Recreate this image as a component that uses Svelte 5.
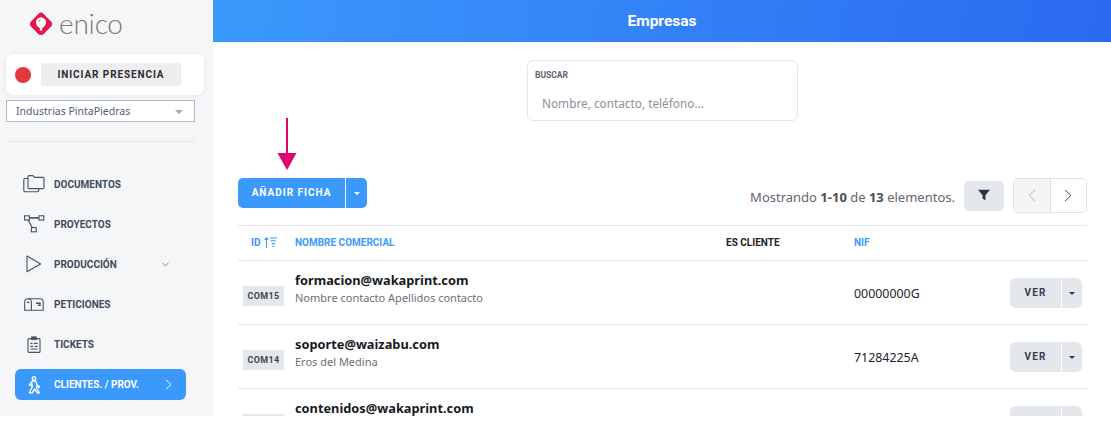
<script>
	const nav = [
		{ label: 'DOCUMENTOS', icon: 'docs' },
		{ label: 'PROYECTOS', icon: 'proj' },
		{ label: 'PRODUCCIÓN', icon: 'play', chevron: true },
		{ label: 'PETICIONES', icon: 'mail' },
		{ label: 'TICKETS', icon: 'clip' }
	];

	const rows = [
		{ id: 'COM15', email: 'formacion@wakaprint.com', contact: 'Nombre contacto Apellidos contacto', nif: '00000000G' },
		{ id: 'COM14', email: 'soporte@waizabu.com', contact: 'Eros del Medina', nif: '71284225A' },
		{ id: '', email: 'contenidos@wakaprint.com', contact: '', nif: '' }
	];
</script>

<div class="page">
	<aside class="sidebar">
		<div class="logo">
			<svg width="24" height="24" viewBox="0 0 24 24">
				<path d="M12 .6 C13 .6 14 1.2 15 2.2 L22 9.4 C23.6 11 23.6 13 22 14.6 L15 21.8 C13.4 23.4 10.6 23.4 9 21.8 L2 14.6 C.4 13 .4 11 2 9.4 L9 2.2 C10 1.2 11 .6 12 .6 Z" fill="#e6174f" />
				<path d="M12 5.6 C15 5.6 17 7.8 17 10.4 C17 13.2 14.8 15.2 13 16.2 L13.4 18.6 L10.6 18.6 L11 16.2 C9.2 15.2 7 13.2 7 10.4 C7 7.8 9 5.6 12 5.6 Z" fill="#fff" />
				<path d="M9.4 9.6 C9.8 8.6 10.6 8 11.6 7.8" fill="none" stroke="#e6174f" stroke-width=".9" />
			</svg>
			<span>enico</span>
		</div>

		<div class="presence">
			<span class="dot"></span>
			<button class="start">INICIAR PRESENCIA</button>
		</div>

		<div class="select">
			<span>Industrias PintaPiedras</span>
			<i class="select-caret"></i>
		</div>

		<hr />

		<nav>
			{#each nav as item}
				<div class="nav-item">
					<span class="nav-icon">
						{#if item.icon === 'docs'}
							<svg width="22" height="18" viewBox="0 0 22 18" fill="none" stroke="#47515f" stroke-width="1.1">
								<path d="M5 3.5 H2 C1.2 3.5 .8 4 .8 4.8 V15.5 C.8 16.3 1.2 16.7 2 16.7 H14.5 C15.3 16.7 15.8 16.3 15.8 15.5 V13.5" />
								<path d="M5 12.5 C5 13.2 5.5 13.6 6.2 13.6 H19.8 C20.6 13.6 21 13.2 21 12.5 V3.6 C21 2.8 20.6 2.4 19.8 2.4 H11.5 L9.8 .6 H6.2 C5.5 .6 5 1 5 1.8 Z" />
							</svg>
						{:else if item.icon === 'proj'}
							<svg width="21" height="18" viewBox="0 0 21 18" fill="none" stroke="#47515f" stroke-width="1.1">
								<rect x=".6" y=".8" width="4.8" height="4.2" />
								<rect x="15" y=".8" width="4.8" height="4.2" />
								<rect x="7.4" y="12.6" width="4.8" height="4.2" />
								<path d="M5.4 2.9 H15" stroke-width="1.6" />
								<path d="M4 5 L8.4 12.6" />
							</svg>
						{:else if item.icon === 'play'}
							<svg width="16" height="18" viewBox="0 0 16 18" fill="none" stroke="#47515f" stroke-width="1.1">
								<path d="M1 1 L14.6 9 L1 16.8 Z" stroke-linejoin="round" />
							</svg>
						{:else if item.icon === 'mail'}
							<svg width="20" height="13" viewBox="0 0 20 13" fill="none" stroke="#47515f" stroke-width="1.1">
								<path d="M.7 12.2 V4 C.7 2 2 .7 4 .7 H16 C18 .7 19.2 2 19.2 4 V12.2 Z" />
								<path d="M7.4 12.2 V4 C7.4 2 6 .7 4 .7" />
								<path d="M3 4.4 H5.4" stroke-width="1.4" />
								<path d="M12 5.2 H16 V7.4 H14" stroke-width="1.4" />
							</svg>
						{:else}
							<svg width="14" height="17" viewBox="0 0 14 17" fill="none" stroke="#47515f" stroke-width="1.1">
								<rect x="1" y="2.6" width="12" height="13.8" rx="1" />
								<rect x="4.6" y=".8" width="4.8" height="3" fill="#47515f" stroke-width=".6" />
								<path d="M3.4 7.4 H5.6 M7 7.4 H10.6 M3.4 10.4 H6 M7.6 10.4 H10.6 M3.4 13 H10.6" />
							</svg>
						{/if}
					</span>
					<span class="nav-label">{item.label}</span>
					{#if item.chevron}
						<svg class="nav-chevron" width="7" height="5" viewBox="0 0 7 5" fill="none" stroke="#6b7483" stroke-width=".9">
							<path d="M.6 1 L3.5 3.8 L6.4 1" />
						</svg>
					{/if}
				</div>
			{/each}
			<div class="nav-item active">
				<span class="nav-icon">
					<svg width="13" height="18" viewBox="0 0 13 18" fill="none" stroke="#fff" stroke-width="1.3" stroke-linejoin="round">
						<circle cx="6" cy="2.4" r="1.7" />
						<path d="M4.4 5 H7.6 L9.4 9.4 L11.6 10.6 L10.8 11.6 L8.4 10.4 L8.4 12 L11.4 16.8 L9.4 17.2 L6.4 13 L4 17.2 L1.4 16.6 L4.2 11 L4.2 8 L3 9.6 L1.4 9 Z" />
					</svg>
				</span>
				<span class="nav-label">CLIENTES. / PROV.</span>
				<svg class="nav-chevron active-chevron" width="7" height="11" viewBox="0 0 7 11" fill="none" stroke="#fff" stroke-width="1">
					<path d="M1 .8 L6 5.5 L1 10.2" />
				</svg>
			</div>
		</nav>
	</aside>

	<main>
		<header>Empresas</header>

		<div class="content">
			<div class="search">
				<label for="buscar">BUSCAR</label>
				<input id="buscar" placeholder="Nombre, contacto, teléfono..." />
			</div>

			<div class="toolbar">
				<div class="add">
					<svg class="arrow" width="20" height="54" viewBox="0 0 20 54">
						<rect x="9" y="0" width="2" height="37" fill="#e0046c" />
						<path d="M.5 35 H19.5 L10 52 Z" fill="#e0046c" />
					</svg>
					<button class="add-main">AÑADIR FICHA</button>
					<button class="add-caret"><i class="caret"></i></button>
				</div>
				<div class="summary">Mostrando <b>1-10</b> de <b>13</b> elementos.</div>
				<button class="filter">
					<svg width="12" height="12" viewBox="0 0 12 12"><path d="M0 .8 H12 L7.4 6.2 V11.4 L4.6 9.6 V6.2 Z" fill="#2c3340" /></svg>
				</button>
				<div class="pager">
					<button disabled>
						<svg width="8" height="13" viewBox="0 0 8 13" fill="none" stroke="#b4b9c0" stroke-width="1"><path d="M7 1 L1 6.5 L7 12" /></svg>
					</button>
					<button>
						<svg width="8" height="13" viewBox="0 0 8 13" fill="none" stroke="#4a5260" stroke-width="1"><path d="M1 1 L7 6.5 L1 12" /></svg>
					</button>
				</div>
			</div>

			<div class="table">
				<div class="row head">
					<div class="id-head">
						ID
						<svg width="13" height="11" viewBox="0 0 13 11" fill="none" stroke="#3b99fc" stroke-width="1.1">
							<path d="M2.5 11 V1 M.6 3 L2.5 .8 L4.4 3 M5.6 1 H13 M6.6 3.8 H12 M7.6 6.6 H11 M8.4 9.4 H10.2" />
						</svg>
					</div>
					<div>NOMBRE COMERCIAL</div>
					<div class="dark">ES CLIENTE</div>
					<div>NIF</div>
					<div></div>
				</div>
				{#each rows as row}
					<div class="row">
						<div class="id-cell"><span class="badge">{row.id}</span></div>
						<div class="name">
							<div class="email">{row.email}</div>
							<div class="contact">{row.contact}</div>
						</div>
						<div></div>
						<div class="nif">{row.nif}</div>
						<div class="actions">
							<button class="ver">VER</button>
							<button class="ver-caret"><i class="caret dark-caret"></i></button>
						</div>
					</div>
				{/each}
			</div>
		</div>
	</main>
</div>

<style>
	:global(body) {
		margin: 0;
		background: #fff;
	}

	.page {
		display: flex;
		height: 416px;
		overflow: hidden;
		font-family: 'Noto Sans', sans-serif;
	}

	button {
		border: none;
		padding: 0;
		font-family: inherit;
	}

	/* Sidebar */
	.sidebar {
		flex: 0 0 213px;
		box-sizing: border-box;
		padding: 12px 0 0 6px;
		background: #f5f6f8;
	}

	.logo {
		display: flex;
		align-items: center;
		gap: 6px;
		height: 24px;
		padding-left: 23px;
	}

	.logo span {
		margin-top: -2px;
		font-family: Lato, sans-serif;
		font-weight: 300;
		font-size: 28px;
		letter-spacing: -0.2px;
		color: #777;
	}

	.presence {
		display: flex;
		align-items: center;
		gap: 10px;
		box-sizing: border-box;
		width: 198px;
		height: 41px;
		margin-top: 18px;
		padding-left: 9px;
		background: #fff;
		border-radius: 8px;
		box-shadow: 0 1px 5px rgba(40, 50, 70, 0.08);
	}

	.dot {
		width: 16px;
		height: 16px;
		border-radius: 50%;
		background: #e5383b;
	}

	.start {
		width: 140px;
		height: 23px;
		border-radius: 2px;
		background: #eee;
		font-family: Roboto, sans-serif;
		font-weight: 700;
		font-size: 10px;
		letter-spacing: 0.9px;
		color: #2a2a35;
	}

	.select {
		display: flex;
		align-items: center;
		justify-content: space-between;
		box-sizing: border-box;
		width: 189px;
		height: 22px;
		margin-top: 5px;
		padding: 0 11px 0 9px;
		background: #fff;
		border: 1px solid #b4b8c4;
		font-size: 10.5px;
		color: #4f5f75;
	}

	.select-caret {
		margin-top: 2px;
		border-top: 4px solid #a5a9b0;
		border-left: 4.5px solid transparent;
		border-right: 4.5px solid transparent;
	}

	hr {
		width: 189px;
		height: 1px;
		margin: 19px 0 0;
		border: none;
		background: #e4e6ea;
	}

	nav {
		display: flex;
		flex-direction: column;
		align-items: flex-start;
		margin-top: 22px;
	}

	.nav-item {
		display: flex;
		align-items: center;
		box-sizing: border-box;
		width: 171px;
		height: 40px;
		margin-left: 9px;
		padding-left: 8px;
		border-radius: 6px;
	}

	.nav-icon {
		display: flex;
		justify-content: center;
		width: 22px;
		margin-right: 9px;
	}

	.nav-label {
		font-family: Roboto, sans-serif;
		font-weight: 700;
		font-size: 10px;
		color: #3f4a5a;
	}

	.nav-chevron {
		margin-left: auto;
		margin-right: 17px;
	}

	.active-chevron {
		margin-right: 14px;
	}

	.nav-item.active {
		height: 31px;
		margin-top: 5px;
		background: #3b99fc;
	}

	.active .nav-label {
		color: #fff;
	}

	/* Main */
	main {
		flex: 1;
		min-width: 0;
	}

	header {
		height: 42px;
		line-height: 42px;
		text-align: center;
		background: linear-gradient(100deg, #3b99fc, #2b6af0);
		font-family: Roboto, sans-serif;
		font-weight: 700;
		font-size: 15.5px;
		color: #fff;
	}

	.content {
		padding: 18px 24px 0 25px;
	}

	.search {
		box-sizing: border-box;
		width: 271px;
		height: 61px;
		margin-left: 289px;
		padding: 9px 7px 0;
		border: 1px solid #e5e7ea;
		border-radius: 6px;
	}

	.search label {
		display: block;
		font-family: Roboto, sans-serif;
		font-weight: 700;
		font-size: 8.5px;
		color: #5c6470;
	}

	.search input {
		width: 230px;
		margin: 15px 0 0 7px;
		padding: 0;
		border: none;
		outline: none;
		font-family: inherit;
		font-size: 11.8px;
	}

	.search input::placeholder {
		color: #8d939b;
		opacity: 1;
	}

	.toolbar {
		display: flex;
		align-items: flex-start;
		margin-top: 57px;
	}

	.add {
		position: relative;
		display: flex;
		gap: 1px;
	}

	.arrow {
		position: absolute;
		left: 39px;
		top: -60px;
	}

	.add-main,
	.add-caret {
		height: 30px;
		background: #3b99fc;
		color: #fff;
	}

	.add-main {
		width: 107px;
		padding-bottom: 2px;
		border-radius: 5px 0 0 5px;
		font-family: Roboto, sans-serif;
		font-weight: 700;
		font-size: 10px;
		letter-spacing: 1px;
	}

	.add-caret {
		width: 21px;
		padding-bottom: 2px;
		border-radius: 0 5px 5px 0;
	}

	.caret {
		display: inline-block;
		vertical-align: middle;
		border-top: 3px solid #fff;
		border-left: 3px solid transparent;
		border-right: 3px solid transparent;
	}

	.dark-caret {
		border-top-color: #333a45;
	}

	.summary {
		margin: 10px 9px 0 auto;
		font-size: 13px;
		line-height: 18px;
		color: #5f6670;
	}

	.summary b {
		font-weight: 700;
		color: #4a5058;
	}

	.filter {
		display: flex;
		align-items: center;
		justify-content: center;
		width: 40px;
		height: 30px;
		margin-top: 3px;
		padding-bottom: 2px;
		background: #e4e8ec;
		border-radius: 5px;
	}

	.pager {
		display: flex;
		box-sizing: border-box;
		width: 74px;
		height: 35px;
		margin-left: 9px;
		border: 1px solid #dee0e3;
		border-radius: 5px;
		overflow: hidden;
	}

	.pager button {
		flex: 1;
		display: flex;
		align-items: center;
		justify-content: center;
		background: #fff;
	}

	.pager button:disabled {
		background: #f5f5f5;
		border-right: 1px solid #dee0e3;
	}

	/* Table */
	.table {
		margin-top: 12px;
		border-top: 1px solid #e4e6e9;
	}

	.row {
		display: grid;
		grid-template-columns: 57px 431px 128px 1fr 110px;
		align-items: center;
		height: 64px;
		border-bottom: 1px solid #e3e8ee;
		box-sizing: border-box;
	}

	.head {
		height: 35px;
		padding-bottom: 2px;
		font-family: Roboto, sans-serif;
		font-weight: 700;
		font-size: 10px;
		color: #3b99fc;
	}

	.head .dark {
		color: #20252c;
	}

	.id-head {
		display: flex;
		align-items: center;
		gap: 4px;
		padding-left: 13px;
	}

	.id-cell {
		padding: 6px 0 0 5px;
	}

	.badge {
		display: flex;
		align-items: center;
		justify-content: center;
		width: 41px;
		height: 20px;
		background: #e4e8ec;
		font-family: Roboto, sans-serif;
		font-weight: 700;
		font-size: 9px;
		letter-spacing: 0.3px;
		color: #3f4650;
	}

	.name {
		align-self: start;
		padding-top: 10px;
	}

	.email {
		font-weight: 700;
		font-size: 12.8px;
		line-height: 18px;
		color: #16191f;
	}

	.contact {
		font-size: 11px;
		line-height: 17px;
		color: #69707a;
	}

	.nif {
		padding-top: 2px;
		font-size: 12.4px;
		color: #20252c;
	}

	.actions {
		display: flex;
		justify-content: flex-end;
		gap: 1px;
		padding-right: 5px;
	}

	.ver,
	.ver-caret {
		height: 30px;
		background: #e4e8ec;
	}

	.ver {
		width: 51px;
		border-radius: 6px 0 0 6px;
		font-family: Roboto, sans-serif;
		font-weight: 700;
		font-size: 10px;
		letter-spacing: 1.2px;
		color: #3a414c;
	}

	.ver-caret {
		width: 20px;
		border-radius: 0 6px 6px 0;
	}
</style>
